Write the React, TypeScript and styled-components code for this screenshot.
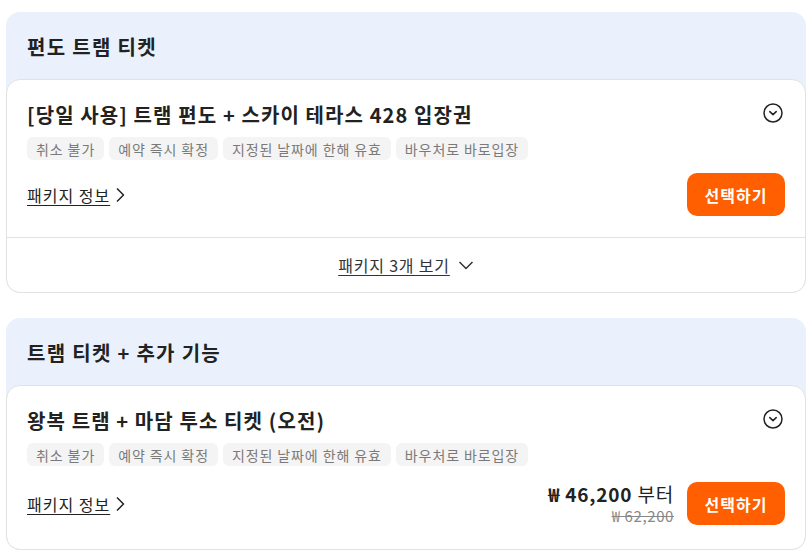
import React from 'react';
import styled, { createGlobalStyle } from 'styled-components';

const GlobalStyle = createGlobalStyle`
  body {
    margin: 0;
    background: #fff;
    font-family: 'Noto Sans CJK KR', 'Noto Sans', sans-serif;
    color: #222;
  }
`;

const Page = styled.div`
  display: flex;
  flex-direction: column;
  gap: 25px;
  padding: 12px 6px;
`;

const Group = styled.section`
  background-color: #eaf1fc;
  border-radius: 14px;
`;

const GroupTitle = styled.h2`
  margin: 0;
  height: 67px;
  display: flex;
  align-items: center;
  padding: 2px 21px 0;
  box-sizing: border-box;
  font-size: 20px;
  letter-spacing: 1.3px;
  font-weight: 700;
  color: #222;
`;

const Card = styled.div`
  background-color: #fff;
  border: 1px solid #e2e2e2;
  border-radius: 14px;
`;

const CardBody = styled.div`
  position: relative;
  padding: 22px 20px 21px 20px;
`;

const CardTitle = styled.h3`
  margin: 0;
  font-size: 20px;
  letter-spacing: 1.1px;
  line-height: 26px;
  font-weight: 700;
  color: #222;
`;

const ToggleIcon = styled.svg`
  position: absolute;
  top: 23px;
  right: 22px;
`;

const Tags = styled.div`
  display: flex;
  gap: 5px;
  margin-top: 9px;
`;

const Tag = styled.span`
  height: 23px;
  display: flex;
  align-items: center;
  padding: 0 9px;
  border-radius: 6px;
  background-color: #f4f4f4;
  color: #7a7a7a;
  font-size: 14px;
  letter-spacing: 0.9px;
`;

const BottomRow = styled.div<{ $tall?: boolean }>`
  display: flex;
  align-items: center;
  justify-content: space-between;
  margin-top: 13px;
  height: ${(p) => (p.$tall ? '49px' : '43px')};
`;

const InfoLink = styled.a`
  display: flex;
  align-items: center;
  gap: 5px;
  font-size: 16px;
  letter-spacing: 1px;
  color: #222;
  cursor: pointer;

  span {
    text-decoration: underline;
    text-underline-offset: 3px;
  }
`;

const RightSide = styled.div`
  display: flex;
  align-items: center;
  gap: 13px;
`;

const PriceBlock = styled.div`
  display: flex;
  flex-direction: column;
  align-items: flex-end;
`;

const Price = styled.div`
  font-size: 19px;
  letter-spacing: 0.8px;
  line-height: 25px;
  color: #222;

  b {
    font-weight: 700;
  }
`;

const OldPrice = styled.div`
  font-size: 15px;
  letter-spacing: 0.6px;
  line-height: 20px;
  color: #888;
  text-decoration: line-through;
`;

const SelectButton = styled.button`
  width: 98px;
  height: 43px;
  border: none;
  border-radius: 10px;
  background-color: #ff5f00;
  color: #fff;
  font-family: inherit;
  font-size: 16px;
  letter-spacing: 1px;
  font-weight: 700;
  cursor: pointer;
`;

const CardFooter = styled.div`
  height: 54px;
  border-top: 1px solid #e2e2e2;
  display: flex;
  align-items: center;
  justify-content: center;
`;

const MoreLink = styled.a`
  display: flex;
  align-items: center;
  gap: 8px;
  font-size: 16px;
  letter-spacing: 0.8px;
  color: #333;
  cursor: pointer;

  span {
    text-decoration: underline;
    text-underline-offset: 3px;
  }
`;

const tags = ['취소 불가', '예약 즉시 확정', '지정된 날짜에 한해 유효', '바우처로 바로입장'];

function Toggle() {
  return (
    <ToggleIcon width="20" height="20" viewBox="0 0 20 20" fill="none">
      <circle cx="10" cy="10" r="9" stroke="#222" strokeWidth="1.5" />
      <path d="M6.8 8.6 L10 11.6 L13.2 8.6" stroke="#222" strokeWidth="1.5" strokeLinecap="round" strokeLinejoin="round" />
    </ToggleIcon>
  );
}

function ArrowRight() {
  return (
    <svg width="10" height="16" viewBox="0 0 10 16" fill="none">
      <path d="M2 1.5 L8.5 8 L2 14.5" stroke="#222" strokeWidth="1.5" strokeLinejoin="round" />
    </svg>
  );
}

function ArrowDown() {
  return (
    <svg width="16" height="10" viewBox="0 0 16 10" fill="none">
      <path d="M1.5 2 L8 8.5 L14.5 2" stroke="#333" strokeWidth="1.5" strokeLinejoin="round" />
    </svg>
  );
}

function PackageCard(props: {
  title: string;
  price?: string;
  oldPrice?: string;
}) {
  return (
    <CardBody>
      <CardTitle>{props.title}</CardTitle>
      <Toggle />
      <Tags>
        {tags.map((t) => (
          <Tag key={t}>{t}</Tag>
        ))}
      </Tags>
      <BottomRow $tall={!!props.price}>
        <InfoLink>
          <span>패키지 정보</span>
          <ArrowRight />
        </InfoLink>
        <RightSide>
          {props.price && (
            <PriceBlock>
              <Price>
                <b>{props.price}</b> 부터
              </Price>
              <OldPrice>{props.oldPrice}</OldPrice>
            </PriceBlock>
          )}
          <SelectButton>선택하기</SelectButton>
        </RightSide>
      </BottomRow>
    </CardBody>
  );
}

export default function App(): JSX.Element {
  return (
    <Page>
      <GlobalStyle />
      <Group>
        <GroupTitle>편도 트램 티켓</GroupTitle>
        <Card>
          <PackageCard title="[당일 사용] 트램 편도 + 스카이 테라스 428 입장권" />
          <CardFooter>
            <MoreLink>
              <span>패키지 3개 보기</span>
              <ArrowDown />
            </MoreLink>
          </CardFooter>
        </Card>
      </Group>
      <Group>
        <GroupTitle>트램 티켓 + 추가 기능</GroupTitle>
        <Card>
          <PackageCard
            title="왕복 트램 + 마담 투소 티켓 (오전)"
            price="₩ 46,200"
            oldPrice="₩ 62,200"
          />
        </Card>
      </Group>
    </Page>
  );
}
